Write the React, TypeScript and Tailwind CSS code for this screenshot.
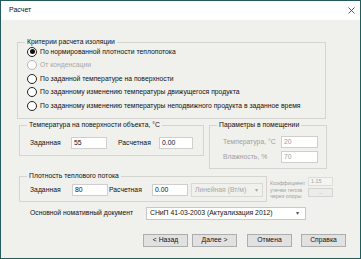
import React from "react";

const font = "font-['Liberation_Sans',Arial,sans-serif]";

function Radio({ label, checked, disabled }: { label: string; checked?: boolean; disabled?: boolean }) {
  return (
    <div className="flex items-center h-[13.5px]">
      <span
        className={
          "w-[10px] h-[10px] rounded-full border bg-white flex items-center justify-center shrink-0 " +
          (disabled ? "border-[#b8b8b8]" : "border-[#222]")
        }
      >
        {checked && <span className="w-[5px] h-[5px] rounded-full bg-[#111]" />}
      </span>
      <span className={"ml-[3px] " + (disabled ? "text-[#a8a8a8]" : "text-[#111]")}>{label}</span>
    </div>
  );
}

function Group({ title, className, children }: { title: string; className: string; children?: React.ReactNode }) {
  return (
    <div className={"relative border border-[#d4d4d0] shrink-0 " + className}>
      <span className="absolute -top-[6px] left-[7px] px-[2px] bg-[#f0f0ec] text-[#111] leading-[10px]">
        {title}
      </span>
      {children}
    </div>
  );
}

function Field({ value, w, disabled }: { value: string; w: string; disabled?: boolean }) {
  return (
    <div
      className={
        "h-[12px] bg-white border border-[#cfcfcf] flex items-center pl-[2px] leading-none shrink-0 " +
        w +
        (disabled ? " text-[#a0a0a0]" : " text-[#0a0a30]")
      }
    >
      {value}
    </div>
  );
}

function Btn({ label }: { label: string }) {
  return (
    <div className="w-[45px] h-[13px] bg-[#e1e1e1] border border-[#adadad] flex items-center justify-center text-[#111] leading-none">
      {label}
    </div>
  );
}

export default function App() {
  return (
    <div className={"w-[361px] h-[259px] border border-[#235b5b] bg-[#f0f0ec] flex flex-col text-[6.8px] whitespace-nowrap " + font}>
      {/* Title bar */}
      <div className="h-[19px] bg-white flex items-center justify-between pl-[8px] pr-[5px] shrink-0">
        <span className="text-[7px] text-[#111]">Расчет</span>
        <svg width="7" height="7" viewBox="0 0 7 7">
          <path d="M0.5 0.5 L6.5 6.5 M6.5 0.5 L0.5 6.5" stroke="#444" strokeWidth="0.9" />
        </svg>
      </div>

      <div className="flex flex-col pl-[16px]">
        {/* Criteria */}
        <Group title="Критерии расчета изоляции" className="mt-[22px] w-[309px] h-[77px] pl-[9px] pt-[2px]">
          <Radio label="По нормированной плотности теплопотока" checked />
          <Radio label="От конденсации" disabled />
          <Radio label="По заданной температуре на поверхности" />
          <Radio label="По заданному изменению температуры движущегося продукта" />
          <Radio label="По заданному изменению температуры неподвижного продукта в заданное время" />
        </Group>

        {/* Temperature + room params */}
        <div className="flex items-start mt-[6px] ml-[2px]">
          <Group title="Температура на поверхности объекта, °C" className="w-[185px] h-[31px] pl-[10px] pt-[11px]">
            <div className="flex items-center">
              <span className="w-[41px] text-[#111]">Заданная</span>
              <Field value="55" w="w-[36px]" />
              <span className="w-[41px] ml-[11px] text-[#111]">Расчетная</span>
              <Field value="0.00" w="w-[34px]" />
            </div>
          </Group>
          <Group title="Параметры в помещении" className="ml-[5px] w-[118px] h-[44px] pl-[13px] pt-[10px]">
            <div className="flex flex-col gap-[3px]">
              <div className="flex items-center">
                <span className="w-[58px] text-[#a0a0a0]">Температура, °C</span>
                <Field value="20" w="w-[37px]" disabled />
              </div>
              <div className="flex items-center">
                <span className="w-[58px] text-[#a0a0a0]">Влажность, %</span>
                <Field value="70" w="w-[37px]" disabled />
              </div>
            </div>
          </Group>
        </div>

        {/* Heat flux */}
        <div className="flex items-start mt-[7px] ml-[2px]">
          <Group title="Плотность теплового потока" className="w-[248px] h-[26px] pl-[10px] pt-[6px]">
            <div className="flex items-center">
              <span className="w-[42px] text-[#111]">Заданная</span>
              <Field value="80" w="w-[36px]" />
              <span className="w-[43px] ml-[1px] text-[#111]">Расчетная</span>
              <Field value="0.00" w="w-[36px]" />
              <div className="ml-[3px] w-[72px] h-[14px] border border-[#d8d8d4] flex items-center justify-between pl-[3px] pr-[4px] text-[#a8a8a8]">
                <span>Линейная (Вт/м)</span>
                <span className="text-[6px]">▾</span>
              </div>
            </div>
          </Group>
          <div className="flex ml-[3px] mt-[1px]">
            <div className="w-[38px] flex flex-col text-[5.4px] leading-[6.5px] text-[#a0a0a0] pt-[3px]">
              <span>Коэффициент</span>
              <span>утечки тепла</span>
              <span>через опоры</span>
            </div>
            <div className="flex flex-col gap-[2px]">
              <div className="w-[25px] h-[9px] bg-[#f4f4f2] border border-[#dcdcd8] text-[5.4px] text-[#a0a0a0] pl-[2px] flex items-center">
                1.15
              </div>
              <div className="w-[25px] h-[9px] bg-[#ececea] border border-[#d4d4d0] text-[5.4px] text-[#a0a0a0] flex items-center justify-center">
                ...
              </div>
            </div>
          </div>
        </div>

        {/* Document */}
        <div className="flex items-center mt-[5px] ml-[13px]">
          <span className="w-[116px] text-[#111]">Основной номативный документ</span>
          <div className="w-[160px] h-[13px] bg-white border border-[#c8c8c8] flex items-center justify-between pl-[3px] pr-[6px] text-[#111]">
            <span>СНиП 41-03-2003 (Актуализация 2012)</span>
            <span className="text-[6px] text-[#555]">▾</span>
          </div>
        </div>

        {/* Buttons */}
        <div className="flex items-center mt-[14px] ml-[126px]">
          <Btn label="< Назад" />
          <div className="ml-[4px]">
            <Btn label="Далее >" />
          </div>
          <div className="ml-[10px]">
            <Btn label="Отмена" />
          </div>
          <div className="ml-[9px]">
            <Btn label="Справка" />
          </div>
        </div>
      </div>
    </div>
  );
}
